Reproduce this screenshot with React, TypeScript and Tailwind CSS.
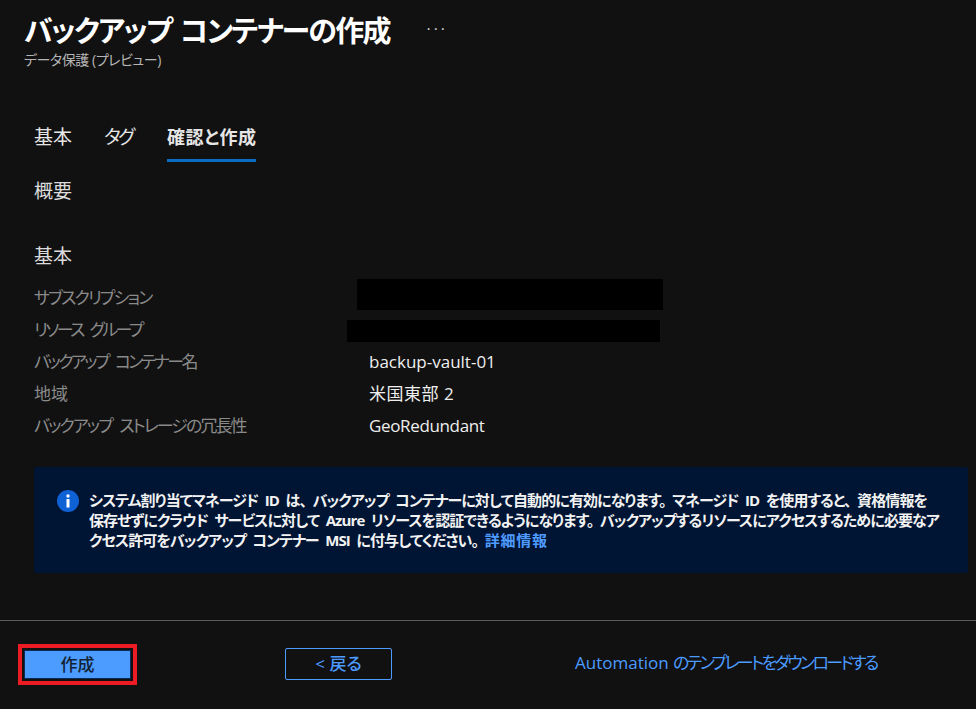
const rows = [
  { label: 'サブスクリプション', value: '', labelClass: 'tracking-[-1.9px]', valueClass: '' },
  { label: 'リソース グループ', value: '', labelClass: 'tracking-[-2.6px] [word-spacing:5px]', valueClass: '' },
  { label: 'バックアップ コンテナー名', value: 'backup-vault-01', labelClass: 'tracking-[-2.6px] [word-spacing:5px]', valueClass: '' },
  { label: '地域', value: '米国東部 2', labelClass: 'tracking-[0px]', valueClass: 'tracking-[0.5px]' },
  { label: 'バックアップ ストレージの冗長性', value: 'GeoRedundant', labelClass: 'tracking-[-1.95px] [word-spacing:5px]', valueClass: 'tracking-[-0.35px]' },
];

export default function App() {
  return (
    <div
      className="relative h-[709px] w-[976px] overflow-hidden bg-[#111111] flex flex-col text-white font-['Open_Sans','Noto_Sans_CJK_JP',sans-serif] [font-feature-settings:'palt']"
    >
      <header className="pl-6 pt-[12px] h-[112px]">
        <div className="flex items-start">
          <h1 className="text-[29px] leading-[38px] font-bold tracking-[-1.7px] [word-spacing:3px] text-white whitespace-nowrap">バックアップ コンテナーの作成</h1>
          <span className="ml-[37px] mt-[5px] text-[14px] leading-[24px] tracking-[3.5px] text-[#e0e0e0]">···</span>
        </div>
        <div className="text-[14px] leading-[20px] tracking-[-0.45px] text-[#b5b5b5] whitespace-nowrap">データ保護 (プレビュー)</div>
      </header>

      <nav className="flex pl-[34px] h-[50px] text-[19px] text-[#e6e6e6]">
        <div className="w-[70px] pt-[12px] leading-[26px]">基本</div>
        <div className="w-[63px] pt-[12px] leading-[26px] tracking-[-2.5px]">タグ</div>
        <div className="h-[50px] w-[89px] pt-[12px] leading-[26px] text-[18px] font-bold tracking-[0.5px] border-b-[3px] border-[#0a6cc2] whitespace-nowrap">確認と作成</div>
      </nav>

      <div className="pl-[34px] pt-[16px] text-[19px] leading-[26px] text-[#dcdcdc]">概要</div>

      <div className="pl-[34px] pt-[39px] text-[19px] leading-[26px] text-[#dcdcdc]">基本</div>

      <dl className="pl-[34px] pt-[13px] text-[17px]">
        {rows.map((r) => (
          <div key={r.label} className="flex h-[32px] items-center">
            <dt className={`w-[335px] text-[#8a8a8a] whitespace-nowrap ${r.labelClass}`}>{r.label}</dt>
            <dd className={`text-[#eeeeee] ${r.valueClass}`}>{r.value}</dd>
          </div>
        ))}
      </dl>

      <div className="ml-[34px] mt-[25px] mr-[8px] h-[106px] rounded-[2px] bg-[#001433] flex pl-[23px] pt-[23px]">
        <svg width="22" height="22" viewBox="0 0 22 22" className="shrink-0">
          <circle cx="11" cy="11" r="11" fill="#0f62d6" />
          <circle cx="11" cy="6" r="1.7" fill="#fff" />
          <rect x="9.5" y="9" width="3" height="8.5" fill="#fff" />
        </svg>
        <p className="ml-[10px] text-[15px] leading-[20px] font-bold tracking-[-0.9px] [word-spacing:3.5px] text-[#f2f2f2] whitespace-nowrap">
          システム割り当てマネージド ID は、 バックアップ コンテナーに対して自動的に有効になります。 マネージド ID を使用すると、 資格情報を<br />
          保存せずにクラウド サービスに対して Azure リソースを認証できるようになります。 バックアップするリソースにアクセスするために必要なア<br />
          クセス許可をバックアップ コンテナー MSI に付与してください。 <a className="text-[#4f9bff] tracking-[0.8px]">詳細情報</a>
        </p>
      </div>

      <div className="mt-[47px] h-px bg-[#5c5c5c]" />

      <footer className="flex h-[88px] items-start pl-[18px] pt-[23px]">
        <div className="h-[41px] w-[119px] border-[4px] border-[#ed1c24] bg-[#111111] flex items-center justify-center">
          <button className="h-[29px] w-[107px] bg-[#4c9bff] border-[1px] border-[#0b2a55] text-[17px] font-medium text-[#112233]">作成</button>
        </div>
        <button className="ml-[148px] mt-[4px] h-[32px] w-[107px] rounded-[2px] border border-[#4c9bff] text-[17px] font-medium text-[#4c9bff]">&lt; 戻る</button>
        <a className="ml-[183px] mt-[6px] text-[17px] leading-[26px] text-[#4c9bff] whitespace-nowrap">Automation <span className="tracking-[-2.65px]">のテンプレートをダウンロードする</span></a>
      </footer>

      <div className="absolute left-[357px] top-[279px] h-[31px] w-[306px] bg-black" />
      <div className="absolute left-[347px] top-[320px] h-[22px] w-[313px] bg-black" />
    </div>
  );
}
